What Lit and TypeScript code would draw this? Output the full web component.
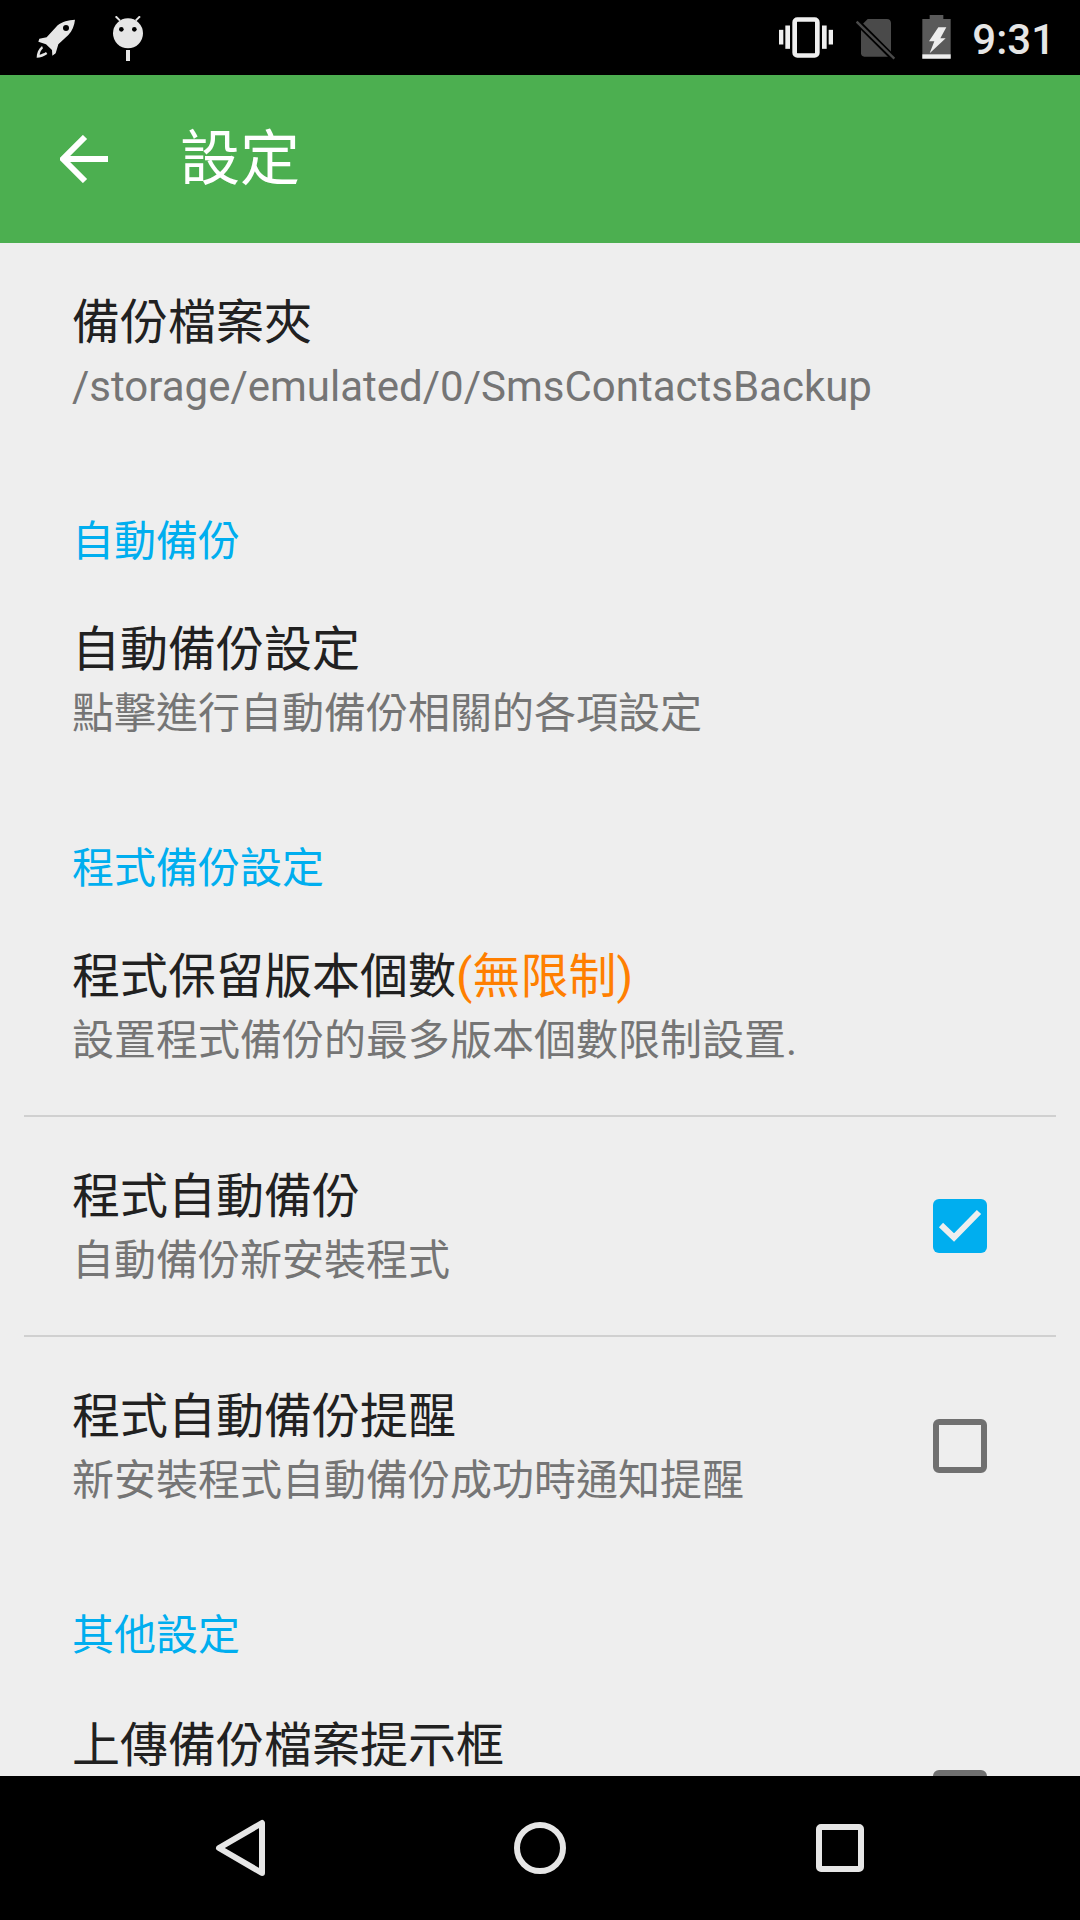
import { LitElement, css, html, nothing } from "lit";
import { customElement } from "lit/decorators.js";

type Row = {
  kind: "row";
  title: string;
  note?: string;
  sub?: string;
  check?: boolean;
  line?: boolean;
  tall?: boolean;
};
type Head = { kind: "head"; label: string };

const items: (Row | Head)[] = [
  { kind: "row", title: "備份檔案夾", sub: "/storage/emulated/0/SmsContactsBackup" },
  { kind: "head", label: "自動備份" },
  { kind: "row", title: "自動備份設定", sub: "點擊進行自動備份相關的各項設定" },
  { kind: "head", label: "程式備份設定" },
  { kind: "row", title: "程式保留版本個數", note: "(無限制)", sub: "設置程式備份的最多版本個數限制設置." },
  { kind: "row", title: "程式自動備份", sub: "自動備份新安裝程式", check: true, line: true },
  { kind: "row", title: "程式自動備份提醒", sub: "新安裝程式自動備份成功時通知提醒", check: false, line: true },
  { kind: "head", label: "其他設定" },
  { kind: "row", title: "上傳備份檔案提示框", check: false, tall: true },
];

@customElement("app-root")
export class AppRoot extends LitElement {
  static styles = css`
    :host {
      display: flex;
      flex-direction: column;
      width: 1080px;
      height: 1920px;
      overflow: hidden;
      background: #eeeeee;
      font-family: Roboto, "Noto Sans CJK TC", sans-serif;
    }
    svg {
      display: block;
      flex: none;
    }
    .status {
      flex: none;
      height: 75px;
      background: #000;
      display: flex;
      align-items: flex-start;
      color: #e6e6e6;
    }
    .rocket {
      margin: 19px 0 0 35px;
    }
    .droid {
      margin: 16px 0 0 38px;
    }
    .tray {
      margin-left: auto;
      padding: 15px 25px 0 0;
      display: flex;
      align-items: flex-start;
    }
    .vibrate {
      margin-top: 2px;
    }
    .nosim {
      margin: 4px 0 0 23px;
    }
    .battery {
      margin-left: 26px;
    }
    .time {
      margin-left: 21px;
      font-size: 42px;
      line-height: 49px;
      font-weight: 500;
    }
    .bar {
      flex: none;
      height: 168px;
      background: #4caf50;
      display: flex;
      align-items: center;
      color: #fff;
    }
    .back {
      margin-left: 60px;
    }
    .bar h1 {
      margin: 1px 0 0 72px;
      font-size: 60px;
      line-height: 80px;
      font-weight: 400;
    }
    .list {
      flex: 1;
      min-height: 0;
      overflow: hidden;
    }
    .head {
      padding: 60px 72px 7px;
      font-size: 42px;
      line-height: 42px;
      color: #00aeef;
    }
    .row {
      display: flex;
      align-items: center;
      height: 218px;
      padding: 0 93px 0 72px;
    }
    .row.tall {
      height: 268px;
      align-items: flex-start;
    }
    .row.tall .text {
      padding-top: 50px;
    }
    .row.tall .box {
      margin-top: 106px;
    }
    .text {
      flex: 1;
      min-width: 0;
      padding-top: 6px;
    }
    .title {
      font-size: 48px;
      line-height: 64px;
      color: #212121;
    }
    .note {
      color: #ff7f00;
    }
    .sub {
      font-size: 42px;
      line-height: 64px;
      color: #757575;
    }
    .line {
      height: 2px;
      margin: 0 24px;
      background: #d0d0d0;
    }
    .box {
      flex: none;
      box-sizing: border-box;
      width: 54px;
      height: 54px;
      border-radius: 6px;
      border: 6px solid #707070;
    }
    .box.on {
      border: 0;
      background: #00aeef;
    }
    .nav {
      flex: none;
      height: 144px;
      background: #000;
      padding: 0 90px;
      display: grid;
      grid-template-columns: repeat(3, 1fr);
      justify-items: center;
      align-items: center;
    }
  `;

  renderRocket() {
    return html`<svg class="rocket" width="40" height="40" viewBox="100 55 120 120" fill="#e6e6e6">
      <path d="M220 57C200 58 182 62 168 74L135 110L113 114L110 123L133 131L151 148L152 165L162 158L170 131L200 103C212 90 218 75 220 57Z" />
      <circle cx="193" cy="82" r="9" fill="#000" />
      <path d="M105 171C105 158 110 145 121 136L124 143C118 149 115 155 114 162C120 160 127 158 133 154L137 160C128 167 116 171 105 171Z" />
    </svg>`;
  }

  renderDroid() {
    return html`<svg class="droid" width="30" height="46" viewBox="333 48 90 138" fill="#e6e6e6">
      <path d="M341 49L354 62M414 49L401 62" stroke="#e6e6e6" stroke-width="6" />
      <circle cx="378" cy="100" r="45" />
      <circle cx="358" cy="88" r="7" fill="#000" />
      <circle cx="397" cy="88" r="7" fill="#000" />
      <rect x="372" y="150" width="12" height="33" />
    </svg>`;
  }

  renderTray() {
    return html`<div class="tray">
      <svg class="vibrate" width="54" height="41" viewBox="120 50 162 122" fill="#efefef">
        <rect x="120" y="88" width="13" height="44" />
        <rect x="139" y="75" width="14" height="70" />
        <rect x="249" y="75" width="14" height="70" />
        <rect x="269" y="88" width="13" height="44" />
        <rect x="167" y="57" width="68" height="108" rx="8" fill="none" stroke="#efefef" stroke-width="14" />
      </svg>
      <svg class="nosim" width="40" height="42" viewBox="350 57 120 126">
        <path d="M385 57H443C450 57 455 62 455 69V170H375C369 170 365 166 365 160V77Z" fill="#4a4a4a" />
        <path d="M346 58L470 182" stroke="#000" stroke-width="18" />
        <path d="M352 65L465 176" stroke="#4a4a4a" stroke-width="7" />
      </svg>
      <svg class="battery" width="29" height="44" viewBox="550 45 85 132">
        <path d="M572 45H613V57H635V176H550V57H572Z" fill="#5a5a5a" />
        <rect x="550" y="163" width="85" height="13" fill="#eee" />
        <path d="M598 82H622L604 115H620L572 160L586 124H570Z" fill="#eee" />
      </svg>
      <span class="time">9:31</span>
    </div>`;
  }

  renderItem(item: Row | Head) {
    if (item.kind === "head") {
      return html`<div class="head">${item.label}</div>`;
    }
    return html`
      ${item.line ? html`<div class="line"></div>` : nothing}
      <div class="row ${item.tall ? "tall" : ""}">
        <div class="text">
          <div class="title">${item.title}${item.note ? html`<span class="note">${item.note}</span>` : nothing}</div>
          ${item.sub ? html`<div class="sub">${item.sub}</div>` : nothing}
        </div>
        ${item.check === undefined
          ? nothing
          : item.check
            ? html`<div class="box on">
                <svg width="54" height="54" viewBox="0 0 54 54">
                  <path d="M8 26L21 38.5L46 13" fill="none" stroke="#eee" stroke-width="6" />
                </svg>
              </div>`
            : html`<div class="box"></div>`}
      </div>
    `;
  }

  render() {
    return html`
      <div class="status">${this.renderRocket()}${this.renderDroid()}${this.renderTray()}</div>
      <header class="bar">
        <svg class="back" width="48" height="48" viewBox="0 0 48 48">
          <path d="M48 24H4M25 2L3 24L25 46" fill="none" stroke="#fff" stroke-width="6" />
        </svg>
        <h1>設定</h1>
      </header>
      <div class="list">${items.map((item) => this.renderItem(item))}</div>
      <nav class="nav">
        <svg width="52" height="58" viewBox="0 0 52 58">
          <path d="M48 4V54L5 29Z" fill="none" stroke="#e6e6e6" stroke-width="6" stroke-linejoin="round" />
        </svg>
        <svg width="52" height="52" viewBox="0 0 52 52">
          <circle cx="26" cy="26" r="23" fill="none" stroke="#e6e6e6" stroke-width="6" />
        </svg>
        <svg width="48" height="48" viewBox="0 0 48 48">
          <rect x="3" y="3" width="42" height="42" rx="2" fill="none" stroke="#e6e6e6" stroke-width="6" />
        </svg>
      </nav>
    `;
  }
}
